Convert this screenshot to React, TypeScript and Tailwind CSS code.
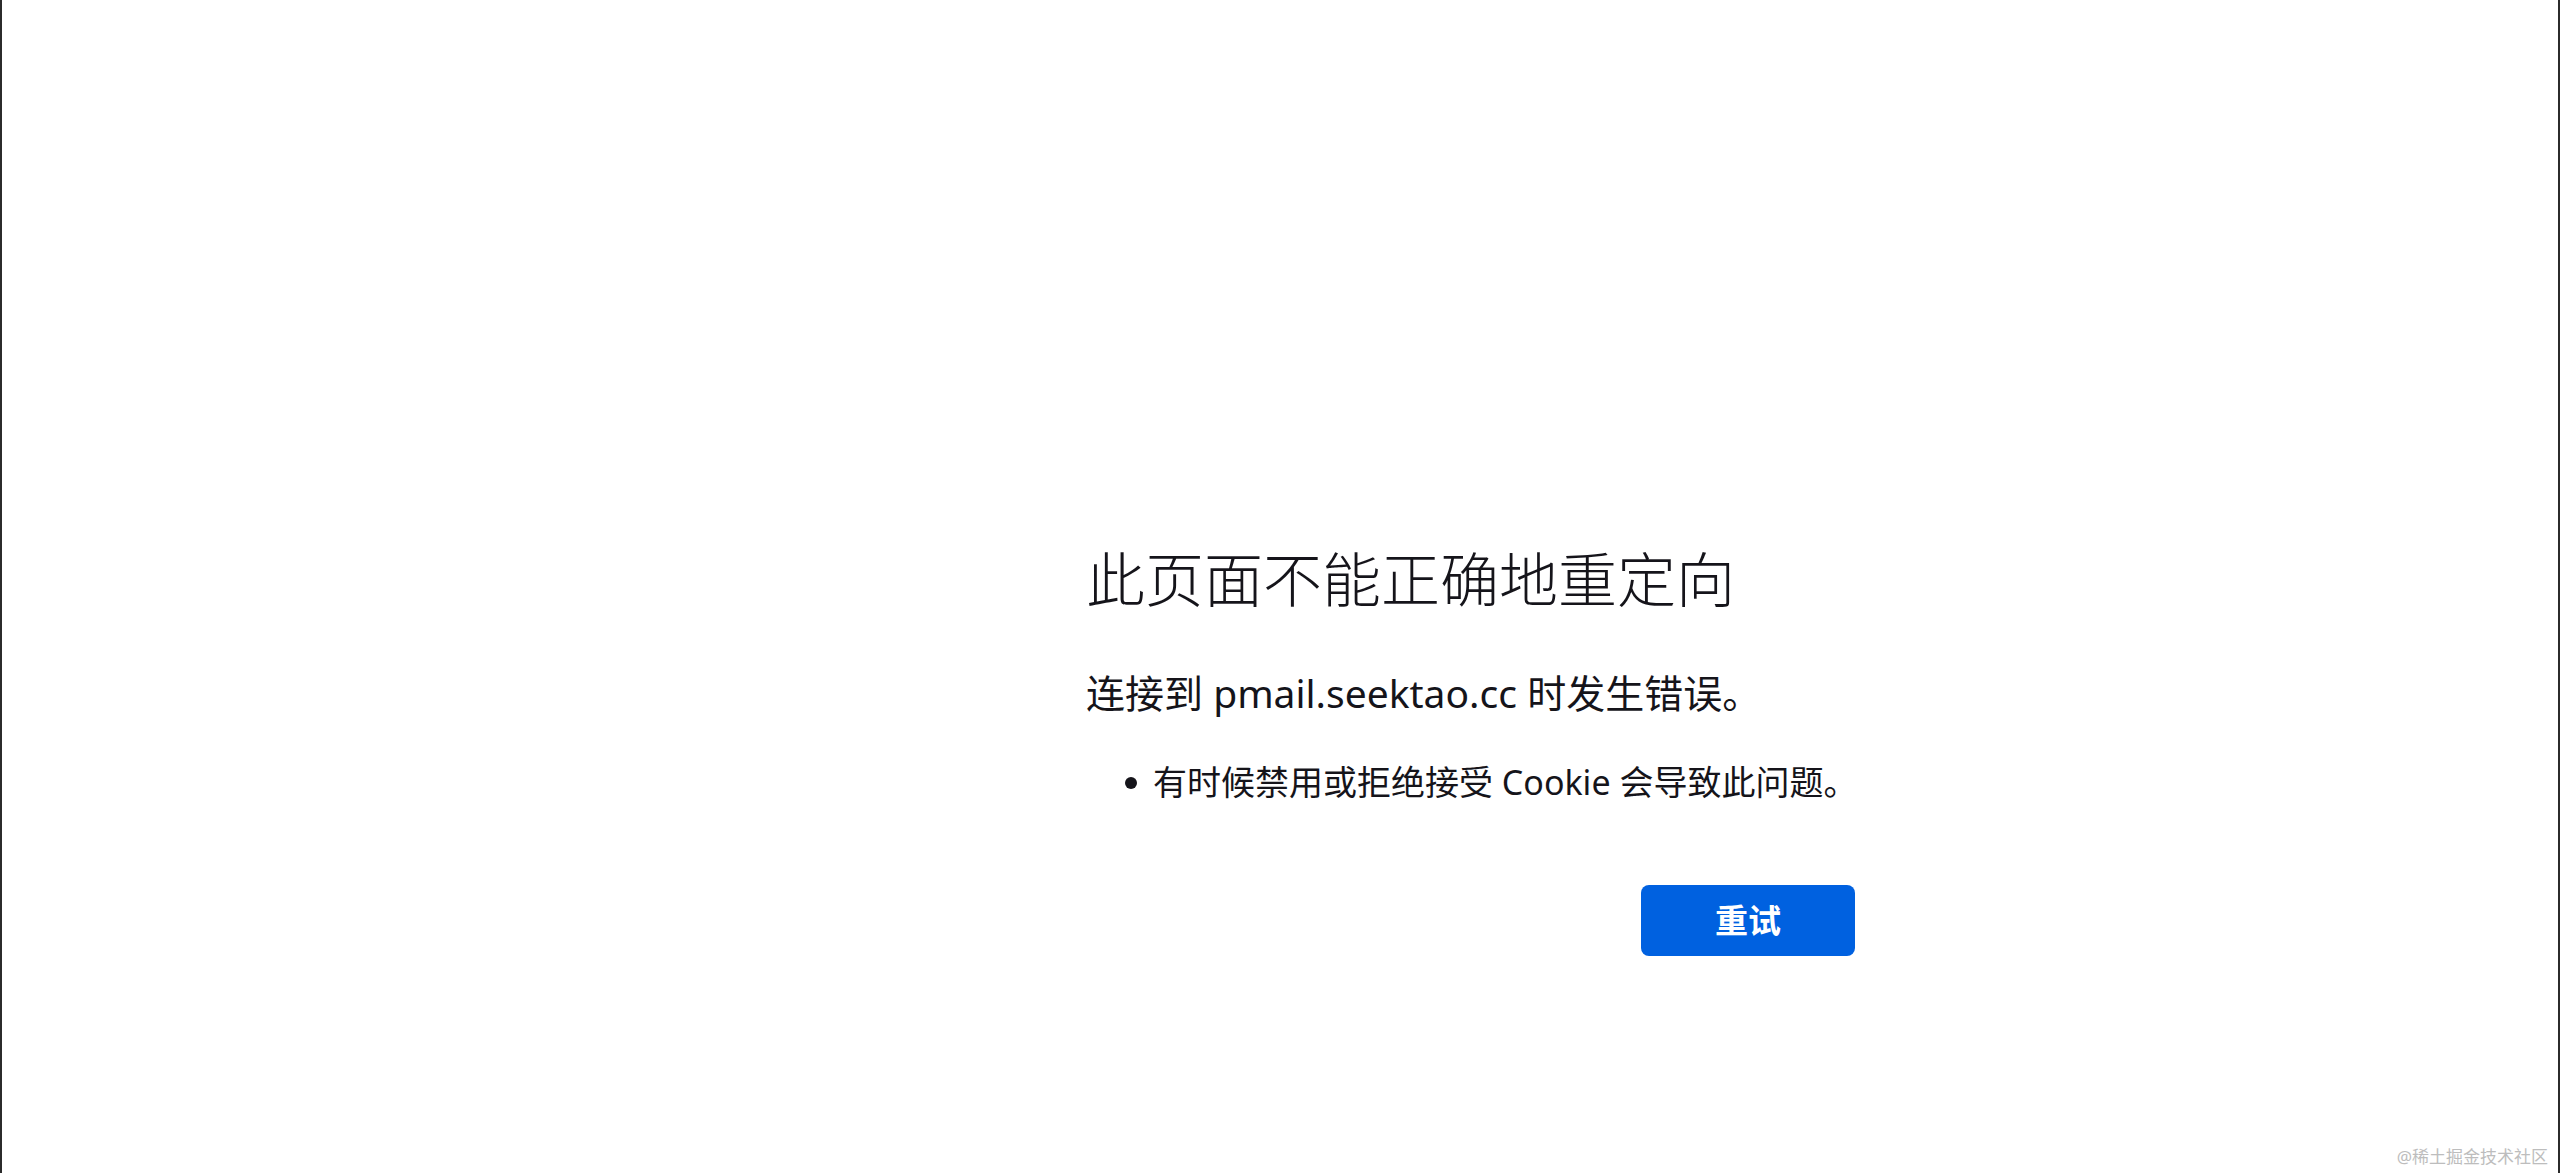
const fontStack = '"Noto Sans", "Noto Sans CJK SC", sans-serif';

const App = () => {
  return (
    <div
      className="relative h-[1173px] overflow-hidden bg-white border-l-2 border-r-2 border-[#2b2b2b] text-[#15141a]"
      style={{ fontFamily: fontStack }}
    >
      <div className="flex justify-center pt-[550px]">
        <div className="w-[1150px] pl-[381px]">
          <h1 className="text-[59px] leading-[59px] font-light whitespace-nowrap">此页面不能正确地重定向</h1>
          <p className="mt-[64px] text-[39px] leading-[39px] whitespace-nowrap">
            连接到 pmail.seektao.cc 时发生错误。
          </p>
          <div className="mt-[53px] flex items-center">
            <span className="ml-[39px] w-[12px] h-[12px] shrink-0 rounded-full bg-[#15141a]"></span>
            <span className="ml-[16px] text-[34px] leading-[35px] whitespace-nowrap">
              有时候禁用或拒绝接受 Cookie 会导致此问题。
            </span>
          </div>
          <div className="mt-[85px] flex justify-end">
            <button className="w-[214px] h-[71px] rounded-lg bg-[#0061e0] text-white text-[33px] font-bold">
              重试
            </button>
          </div>
        </div>
      </div>
      <span className="absolute right-[10px] bottom-[4px] text-[17px] text-[#bdbdbd]">
        @稀土掘金技术社区
      </span>
    </div>
  );
};

export default App;
